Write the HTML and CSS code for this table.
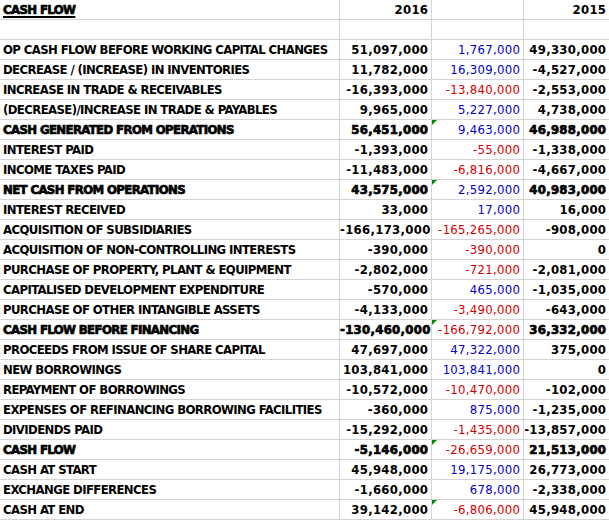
FILE: index.html
```html
<!DOCTYPE html>
<html>
<head>
<meta charset="utf-8">
<link rel="stylesheet" href="styles.css">
</head>
<body>
<table class="sheet">
<colgroup><col class="c1"><col class="c2"><col class="c3"><col class="c4"></colgroup>
<tr><td class="lbl heavy"><span class="ul">CASH FLOW</span></td><td class="num">2016</td><td class="num"></td><td class="num">2015</td></tr>
<tr><td></td><td></td><td></td><td></td></tr>
<tr><td class="lbl">OP CASH FLOW BEFORE WORKING CAPITAL CHANGES</td><td class="num">51,097,000</td><td class="num pos">1,767,000</td><td class="num">49,330,000</td></tr>
<tr><td class="lbl">DECREASE / (INCREASE) IN INVENTORIES</td><td class="num">11,782,000</td><td class="num pos">16,309,000</td><td class="num">-4,527,000</td></tr>
<tr><td class="lbl">INCREASE IN TRADE &amp; RECEIVABLES</td><td class="num">-16,393,000</td><td class="num neg">-13,840,000</td><td class="num">-2,553,000</td></tr>
<tr><td class="lbl">(DECREASE)/INCREASE IN TRADE &amp; PAYABLES</td><td class="num">9,965,000</td><td class="num pos">5,227,000</td><td class="num">4,738,000</td></tr>
<tr class="total"><td class="lbl">CASH GENERATED FROM OPERATIONS</td><td class="num">56,451,000</td><td class="num pos flag">9,463,000</td><td class="num">46,988,000</td></tr>
<tr><td class="lbl">INTEREST PAID</td><td class="num">-1,393,000</td><td class="num neg">-55,000</td><td class="num">-1,338,000</td></tr>
<tr><td class="lbl">INCOME TAXES PAID</td><td class="num">-11,483,000</td><td class="num neg">-6,816,000</td><td class="num">-4,667,000</td></tr>
<tr class="total"><td class="lbl">NET CASH FROM OPERATIONS</td><td class="num">43,575,000</td><td class="num pos flag">2,592,000</td><td class="num">40,983,000</td></tr>
<tr><td class="lbl">INTEREST RECEIVED</td><td class="num">33,000</td><td class="num pos">17,000</td><td class="num">16,000</td></tr>
<tr><td class="lbl">ACQUISITION OF SUBSIDIARIES</td><td class="num">-166,173,000</td><td class="num neg">-165,265,000</td><td class="num">-908,000</td></tr>
<tr><td class="lbl">ACQUISITION OF NON-CONTROLLING INTERESTS</td><td class="num">-390,000</td><td class="num neg">-390,000</td><td class="num">0</td></tr>
<tr><td class="lbl">PURCHASE OF PROPERTY, PLANT &amp; EQUIPMENT</td><td class="num">-2,802,000</td><td class="num neg">-721,000</td><td class="num">-2,081,000</td></tr>
<tr><td class="lbl">CAPITALISED DEVELOPMENT EXPENDITURE</td><td class="num">-570,000</td><td class="num pos">465,000</td><td class="num">-1,035,000</td></tr>
<tr><td class="lbl">PURCHASE OF OTHER INTANGIBLE ASSETS</td><td class="num">-4,133,000</td><td class="num neg">-3,490,000</td><td class="num">-643,000</td></tr>
<tr class="total"><td class="lbl">CASH FLOW BEFORE FINANCING</td><td class="num">-130,460,000</td><td class="num neg flag">-166,792,000</td><td class="num">36,332,000</td></tr>
<tr><td class="lbl">PROCEEDS FROM ISSUE OF SHARE CAPITAL</td><td class="num">47,697,000</td><td class="num pos">47,322,000</td><td class="num">375,000</td></tr>
<tr><td class="lbl">NEW BORROWINGS</td><td class="num">103,841,000</td><td class="num pos">103,841,000</td><td class="num">0</td></tr>
<tr><td class="lbl">REPAYMENT OF BORROWINGS</td><td class="num">-10,572,000</td><td class="num neg">-10,470,000</td><td class="num">-102,000</td></tr>
<tr><td class="lbl">EXPENSES OF REFINANCING BORROWING FACILITIES</td><td class="num">-360,000</td><td class="num pos">875,000</td><td class="num">-1,235,000</td></tr>
<tr><td class="lbl">DIVIDENDS PAID</td><td class="num">-15,292,000</td><td class="num neg">-1,435,000</td><td class="num">-13,857,000</td></tr>
<tr class="total"><td class="lbl">CASH FLOW</td><td class="num">-5,146,000</td><td class="num neg flag">-26,659,000</td><td class="num">21,513,000</td></tr>
<tr><td class="lbl">CASH AT START</td><td class="num">45,948,000</td><td class="num pos">19,175,000</td><td class="num">26,773,000</td></tr>
<tr><td class="lbl">EXCHANGE DIFFERENCES</td><td class="num">-1,660,000</td><td class="num pos">678,000</td><td class="num">-2,338,000</td></tr>
<tr><td class="lbl">CASH AT END</td><td class="num">39,142,000</td><td class="num neg flag">-6,806,000</td><td class="num">45,948,000</td></tr>
</table>
</body>
</html>
```

FILE: styles.css
```css
html, body {
  margin: 0;
  padding: 0;
  background: #ffffff;
}

.sheet {
  border-collapse: separate;
  border-spacing: 0;
  table-layout: fixed;
  width: 609px;
  font-family: "DejaVu Sans Condensed", "DejaVu Sans", sans-serif;
  font-size: 13px;
  font-weight: bold;
  color: #000;
}

.c1 { width: 340px; }
.c2 { width: 92px; }
.c3 { width: 92px; }
.c4 { width: 85px; }

.sheet td {
  height: 19px;
  padding: 0 3px;
  border-bottom: 1px solid #d4d4d4;
  border-right: 1px solid #d4d4d4;
  white-space: nowrap;
  overflow: visible;
  line-height: 19px;
  position: relative;
  vertical-align: middle;
}

.sheet td:last-child {
  border-right: none;
}

.lbl {
  text-align: left;
  letter-spacing: -0.6px;
}

.num {
  text-align: right;
  letter-spacing: 0.3px;
}

.sheet td.num {
  padding-left: 0;
  padding-right: 2.7px;
}

.pos {
  color: #0000c8;
  font-weight: normal;
}

.neg {
  color: #d00000;
  font-weight: normal;
}

.total td:not(.pos):not(.neg),
.heavy {
  -webkit-text-stroke: 0.7px currentColor;
}

.ul {
  text-decoration: underline;
  text-decoration-thickness: 2px;
  text-underline-offset: 2px;
}

.flag::before {
  content: "";
  position: absolute;
  left: 0;
  top: 0;
  border-top: 5px solid #008a00;
  border-right: 5px solid transparent;
}
```
